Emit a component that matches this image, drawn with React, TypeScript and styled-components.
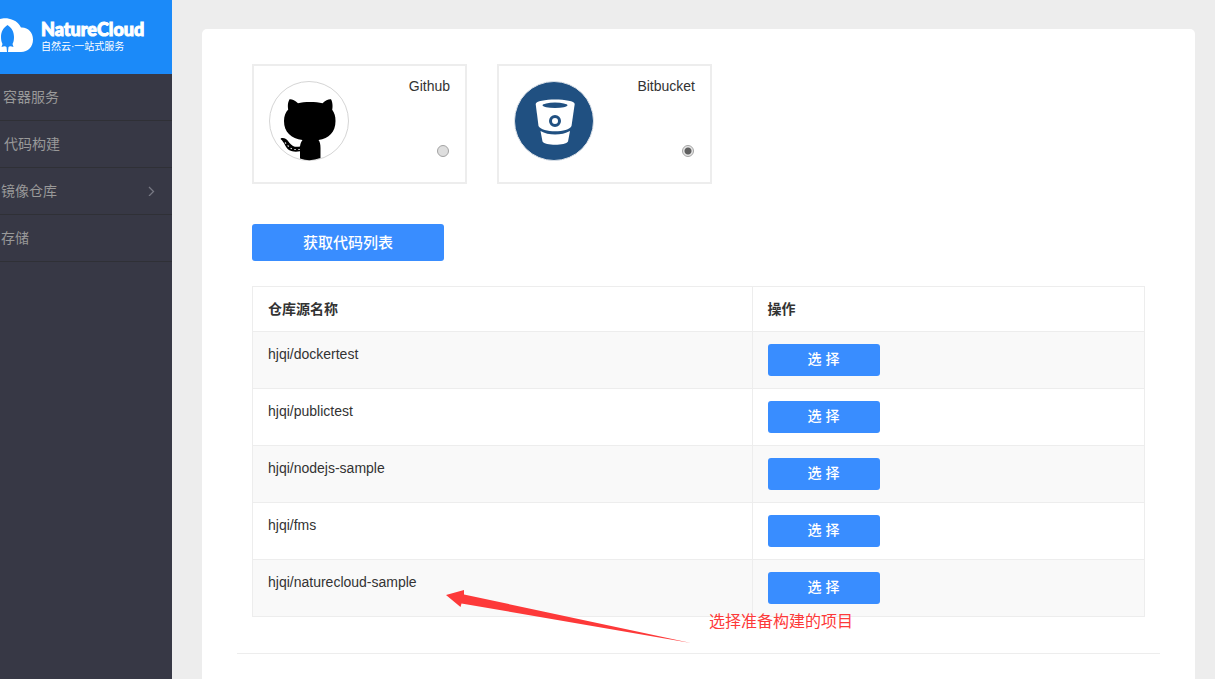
import React, { useState } from "react";
import styled, { createGlobalStyle } from "styled-components";

const GlobalStyle = createGlobalStyle`
  * { box-sizing: border-box; }
  body {
    margin: 0;
    background: #ededed;
    color: #333;
    font: 14px/20px "Liberation Sans", "Noto Sans CJK SC", sans-serif;
  }
`;

const Page = styled.div`
  display: flex;
  height: 100vh;
  overflow: hidden;
`;

const Sidebar = styled.aside`
  flex: 0 0 172px;
  background: #373845;
`;

const Brand = styled.a`
  display: flex;
  align-items: flex-start;
  gap: 8px;
  height: 74px;
  padding-top: 18px;
  background: #1b8af9;
  color: #fff;
  text-decoration: none;
`;

const BrandText = styled.span`
  display: flex;
  flex-direction: column;
  padding-top: 1px;
`;

const BrandName = styled.span`
  font: 900 18px/20px Lato, sans-serif;
  -webkit-text-stroke: 1px #fff;
`;

const BrandTagline = styled.span`
  font-size: 10px;
  line-height: 16px;
`;

const NavLink = styled.a<{ $indent: number }>`
  display: flex;
  align-items: center;
  justify-content: space-between;
  height: 47px;
  padding: 0 16px 0 ${(p) => p.$indent}px;
  border-bottom: 1px solid #2f3036;
  color: #999;
  text-decoration: none;
`;

const Main = styled.main`
  flex: 1;
  min-width: 0;
  padding: 29px 20px 0 30px;
`;

const Panel = styled.section`
  min-height: 100%;
  padding: 35px;
  border-radius: 5px;
  background: #fff;
`;

const Content = styled.div`
  padding: 0 15px;
`;

const Providers = styled.div`
  display: flex;
  gap: 30px;
`;

const ProviderCard = styled.label`
  display: flex;
  justify-content: space-between;
  align-items: flex-start;
  width: 215px;
  height: 120px;
  padding: 10px 15px;
  border: 2px solid #ededed;
  cursor: pointer;
`;

const Avatar = styled.svg`
  width: 80px;
  height: 80px;
  margin-top: 5px;
`;

const ProviderSide = styled.span`
  display: flex;
  flex-direction: column;
  justify-content: space-between;
  align-items: flex-end;
  height: 81px;
`;

const Radio = styled.input`
  appearance: none;
  width: 12px;
  height: 12px;
  margin: 0 1px 0 0;
  border: 1px solid #a3a3a3;
  border-radius: 50%;
  background: #dedede;

  &:checked {
    background: radial-gradient(circle, #606060 0 3px, #e6e6e6 4px);
  }
`;

const Button = styled.button<{ $large?: boolean }>`
  display: block;
  width: ${(p) => (p.$large ? 192 : 112)}px;
  height: ${(p) => (p.$large ? 37 : 32)}px;
  padding: 0 0 ${(p) => (p.$large ? 0 : 2)}px;
  border: 0;
  border-radius: 3px;
  background: #398dff;
  color: #fff;
  font: 500 ${(p) => (p.$large ? 15 : 14)}px/20px "Liberation Sans", "Noto Sans CJK SC", sans-serif;
  cursor: pointer;
`;

const FetchBar = styled.div`
  padding: 40px 0 25px;
`;

const TableArea = styled.div`
  position: relative;
`;

const Table = styled.table`
  width: 100%;
  border-collapse: collapse;
  table-layout: fixed;
`;

const Row = styled.tr`
  &:nth-child(odd) {
    background: #f9f9f9;
  }
`;

const Th = styled.th`
  padding: 12px 15px;
  border: 1px solid #ededed;
  font-weight: 700;
  text-align: left;

  &:first-child {
    width: 56%;
  }
`;

const Td = styled.td`
  padding: 12px 15px;
  border: 1px solid #ededed;
  vertical-align: top;
`;

const Arrow = styled.svg`
  position: absolute;
  top: 300px;
  left: 194px;
  width: 246px;
  height: 60px;
  pointer-events: none;
`;

const Note = styled.span`
  position: absolute;
  top: 326px;
  left: 457px;
  color: #fd3939;
  font-size: 16px;
  white-space: nowrap;
`;

const Divider = styled.hr`
  height: 1px;
  margin: 36px 0 0;
  border: 0;
  background: #ededed;
`;

const navItems = [
  { label: "容器服务", indent: 3 },
  { label: "代码构建", indent: 4 },
  { label: "镜像仓库", indent: 1, expandable: true },
  { label: "存储", indent: 1 },
];

const repos = [
  "hjqi/dockertest",
  "hjqi/publictest",
  "hjqi/nodejs-sample",
  "hjqi/fms",
  "hjqi/naturecloud-sample",
];

const CloudLogo = () => (
  <svg width="33" height="34" viewBox="0 0 33 34" aria-hidden="true">
    <path
      d="M0 1C3 0 8-.5 13 2c4 1.500 6 4 8 7.500C28 9 33 14.500 33 21.500 33 29 28 34 21 34H0Z"
      fill="#fff"
    />
    <path
      d="M7.500 7C3 10 1 14 1 19c0 3 .5 5 1.500 7L1.500 29c2.500-1 4-1 5 0l.5 5h1l.5-5c1-1 2.500-1 5 0L12.500 26c1-2 1.500-4 1.500-7 0-5-2-9-6.500-12Z"
      fill="#1b8af9"
    />
  </svg>
);

const GithubAvatar = () => (
  <Avatar viewBox="0 0 80 80" aria-hidden="true">
    <circle cx="40" cy="40" r="39.500" fill="#fff" stroke="#d5d5d5" />
    <path d="M20.500 18.300C23 18 26 19.500 29 22.300c6-1.600 18-1.600 24.500 0 3-2.800 6-4.300 8.500-4 1.700 3.200 1.800 7 1.200 10.500C65.500 32 66.500 35 66.500 40c0 11-6.500 17.500-17 19 1.500 2 2 4.500 2 8V77Q41 81 31 77.500V70.300c-8 1.200-12-.8-14.500-5.300-1.500-3-3-5.500-5-7 0-1.500 3.500-1.500 5.500 0 2.500 1.800 3.500 5 7 7 2 1 4.500 1 7 .5.300-2.500 1-4.700 2.500-6.500C22 57.500 15 51 15 40c0-5 1.500-8.500 4.200-11.500-.7-3.500-.4-7 1.300-10.200Z" />
    <path d="M16 61.500l5 5.500 4 1.500h6" fill="none" stroke="#ddd" strokeWidth="1.200" strokeDasharray="1.500 2.500" />
  </Avatar>
);

const BitbucketAvatar = () => (
  <Avatar viewBox="0 0 80 80" aria-hidden="true">
    <circle cx="40" cy="40" r="39.500" fill="#205081" stroke="#dbe1e8" />
    <path
      d="M21.700 23c0-6 39-6 39 0L57.500 45c-3 7-29.500 7-33 0Z"
      fill="#fff"
    />
    <ellipse cx="41" cy="24.300" rx="12.500" ry="2.700" fill="#205081" />
    <circle cx="41" cy="40" r="4.500" fill="#fff" stroke="#205081" strokeWidth="3" />
    <path d="M26.500 50c8 4.800 21 4.800 29.500 0L54 60.500c-2.500 4.300-23 4.300-25.500 0Z" fill="#fff" />
  </Avatar>
);

const providers = [
  { id: "github", name: "Github", Icon: GithubAvatar },
  { id: "bitbucket", name: "Bitbucket", Icon: BitbucketAvatar },
];

export default function App() {
  const [provider, setProvider] = useState("bitbucket");

  return (
    <Page>
      <GlobalStyle />
      <Sidebar>
        <Brand href="#">
          <CloudLogo />
          <BrandText>
            <BrandName>NatureCloud</BrandName>
            <BrandTagline>自然云·一站式服务</BrandTagline>
          </BrandText>
        </Brand>
        <nav>
          {navItems.map((item) => (
            <NavLink key={item.label} href="#" $indent={item.indent}>
              {item.label}
              {item.expandable && (
                <svg width="8" height="10" viewBox="0 0 8 10" aria-hidden="true">
                  <path d="M1 1l4.500 4.500L1 10" fill="none" stroke="#777883" strokeWidth="1.300" />
                </svg>
              )}
            </NavLink>
          ))}
        </nav>
      </Sidebar>
      <Main>
        <Panel>
          <Content>
            <Providers>
              {providers.map(({ id, name, Icon }) => (
                <ProviderCard key={id}>
                  <Icon />
                  <ProviderSide>
                    {name}
                    <Radio
                      type="radio"
                      name="provider"
                      value={id}
                      checked={provider === id}
                      onChange={() => setProvider(id)}
                    />
                  </ProviderSide>
                </ProviderCard>
              ))}
            </Providers>
            <FetchBar>
              <Button type="button" $large>获取代码列表</Button>
            </FetchBar>
            <TableArea>
              <Table>
                <thead>
                  <tr>
                    <Th scope="col">仓库源名称</Th>
                    <Th scope="col">操作</Th>
                  </tr>
                </thead>
                <tbody>
                  {repos.map((repo) => (
                    <Row key={repo}>
                      <Td>{repo}</Td>
                      <Td>
                        <Button type="button">选 择</Button>
                      </Td>
                    </Row>
                  ))}
                </tbody>
              </Table>
              <Arrow viewBox="0 0 246 60" aria-hidden="true">
                <path d="M0 9l18-5v4.500L245 57 15.500 17.500l-1 3.500Z" fill="#fd3939" />
              </Arrow>
              <Note>选择准备构建的项目</Note>
            </TableArea>
          </Content>
          <Divider />
        </Panel>
      </Main>
    </Page>
  );
}
